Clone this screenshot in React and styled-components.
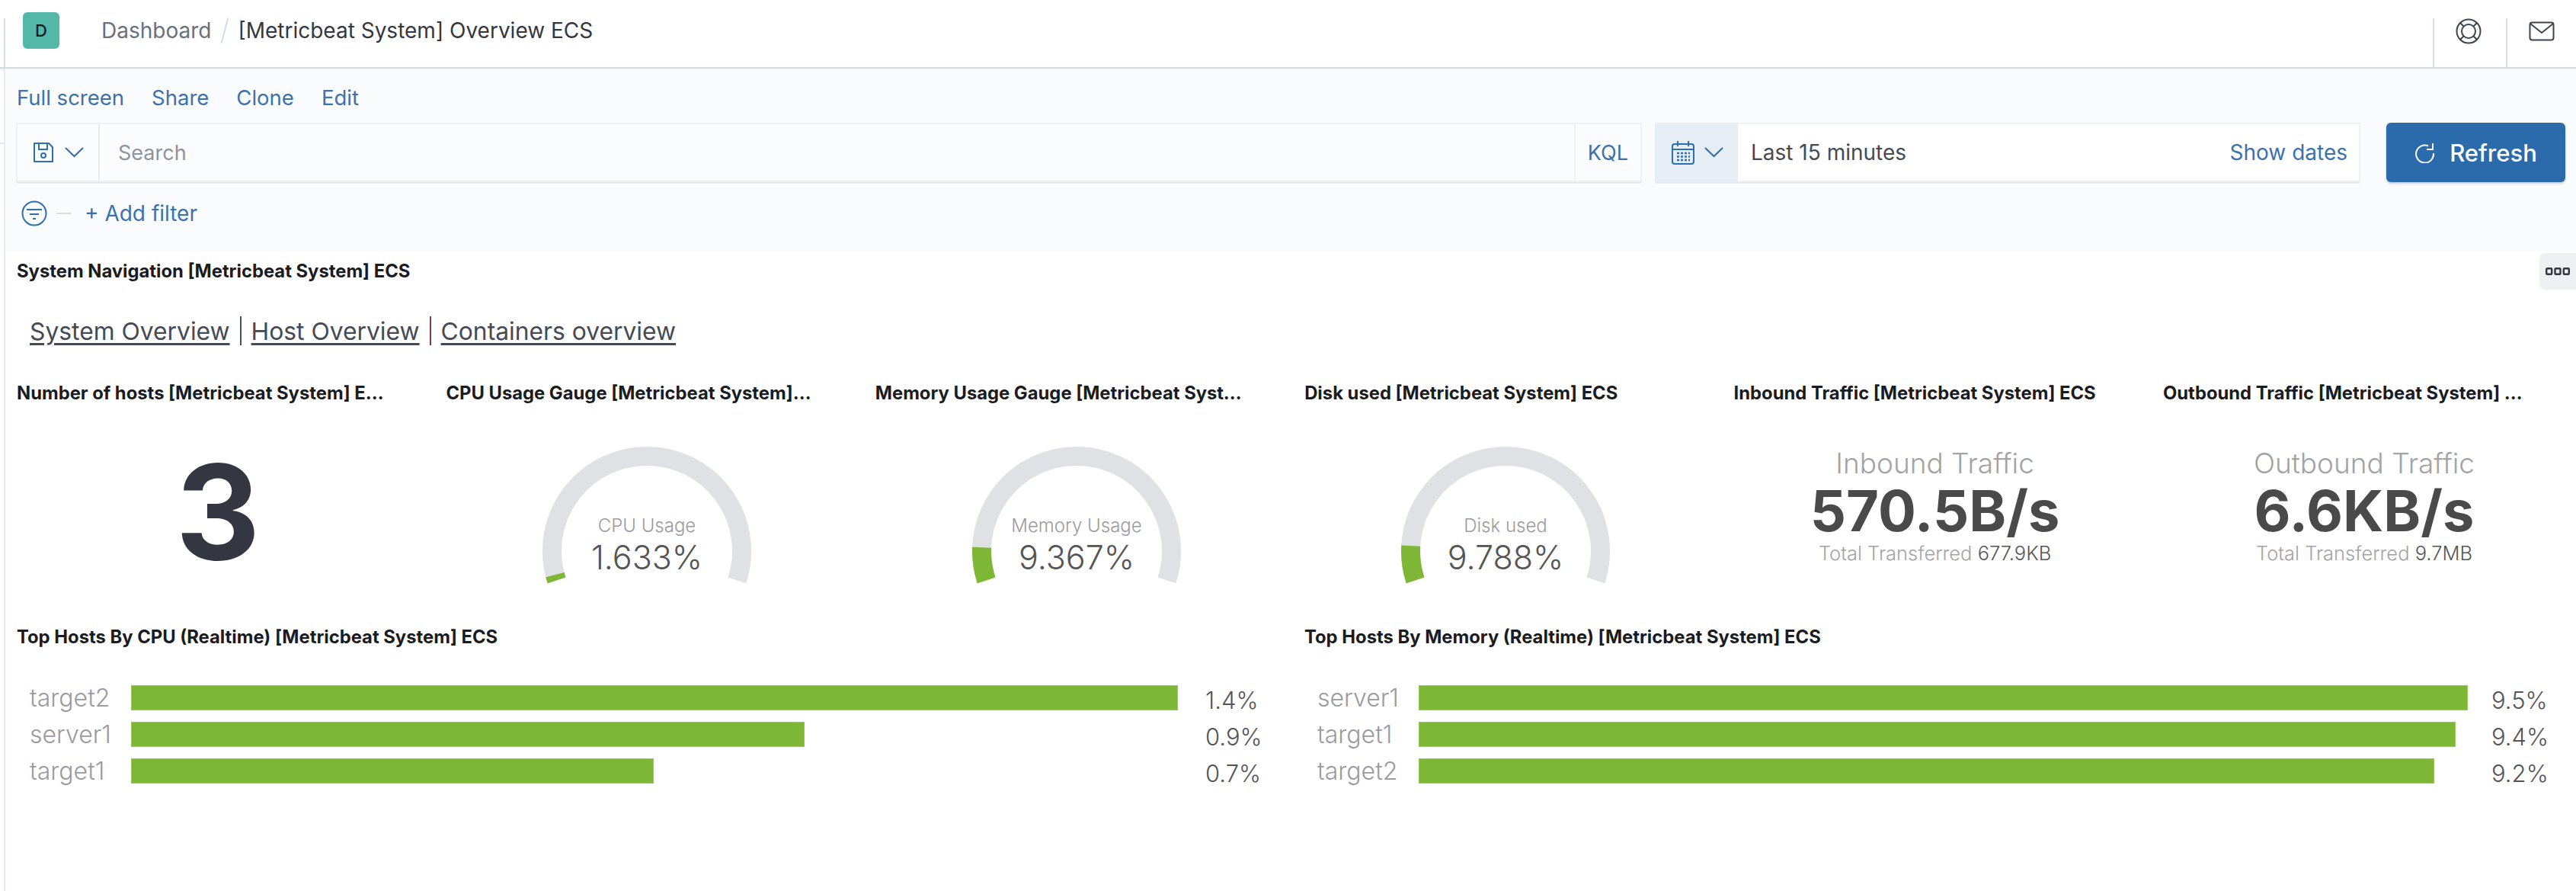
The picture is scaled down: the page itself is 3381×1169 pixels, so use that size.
import React from "react";
import styled, { createGlobalStyle } from "styled-components";

const GlobalStyle = createGlobalStyle`
  html, body {
    margin: 0;
    padding: 0;
    background: #fff;
  }
  * {
    box-sizing: border-box;
  }
`;

const Page = styled.div`
  width: 3381px;
  height: 1169px;
  overflow: hidden;
  background: #fff;
  font-family: Inter, "Liberation Sans", sans-serif;
  color: #343741;
`;

/* top bar */
const Header = styled.header`
  display: flex;
  height: 90px;
  border-bottom: 2px solid #d3dae6;
  box-shadow: 0 2px 3px rgba(152, 162, 179, 0.2);
  position: relative;
`;

const HeaderCell = styled.div`
  margin-top: 24px;
  width: ${(p) => p.$width}px;
  padding: ${(p) => p.$pad || "0"};
  border-left: ${(p) => (p.$line ? "2px solid #d8deea" : "none")};
  display: flex;
  justify-content: center;
`;

const Tile = styled.div`
  width: 48px;
  height: 48px;
  margin-top: -8px;
  border-radius: 6px;
  background: #54b8a9;
  color: #1a1c21;
  display: flex;
  align-items: center;
  justify-content: center;
  font-size: 22px;
  font-weight: 500;
`;

const Breadcrumbs = styled.nav`
  flex: 1;
  display: flex;
  align-items: center;
  height: 64px;
  margin-top: 8px;
  padding-left: 32px;
  font-size: 28px;
  color: #343741;
`;

const Crumb = styled.span`
  color: ${(p) => p.$color || "#343741"};
`;

const CrumbSlash = styled.span`
  width: 2px;
  height: 34px;
  margin: 0 16px 0 17px;
  background: #d3dae6;
  transform: rotate(15deg);
`;

const Body = styled.main`
  position: relative;
  margin-left: 5px;
  height: 1079px;
  border-left: 2px solid #e6e9f0;

  &::before {
    content: "";
    position: absolute;
    left: -7px;
    top: 97px;
    width: 5px;
    height: 2px;
    background: #e6e9f0;
  }
`;

/* query area */
const SubNav = styled.section`
  height: 240px;
  padding: 20px 14px 0 14px;
  background: #fafbfd;
`;

const TopMenu = styled.div`
  display: flex;
  gap: 36px;
  height: 36px;
  margin: 0 0 15px 1px;
  align-items: center;
  font-size: 27.5px;
  color: #3a72ad;
`;

const QueryRow = styled.div`
  display: flex;
  height: 78px;
`;

const Field = styled.div`
  display: flex;
  align-items: stretch;
  background: #fbfcfd;
  border: 2px solid #edf0f5;
  box-shadow: 0 2px 2px -1px rgba(152, 162, 179, 0.35);
`;

const SearchField = styled(Field)`
  width: 2134px;
`;

const SaveButton = styled.div`
  width: 108px;
  display: flex;
  align-items: center;
  gap: 14px;
  padding-left: 20px;
  border-right: 2px solid #e6e9f0;
  color: #2e6fae;
`;

const SearchText = styled.div`
  flex: 1;
  display: flex;
  align-items: center;
  padding-left: 24px;
  font-size: 27px;
  color: #8e93a0;
`;

const Kql = styled.div`
  display: flex;
  align-items: center;
  padding: 0 16px;
  border-left: 2px solid #edf0f5;
  font-size: 27px;
  color: #3a72ad;
`;

const DateField = styled(Field)`
  width: 926px;
  margin-left: 17px;
  background: #fff;
`;

const DateButton = styled.div`
  width: 109px;
  margin: -2px 0 -2px -2px;
  display: flex;
  align-items: center;
  gap: 13px;
  padding-left: 22px;
  background: #e6edf4;
  color: #2e6fae;
`;

const DateText = styled.div`
  flex: 1;
  display: flex;
  align-items: center;
  justify-content: space-between;
  padding: 0 15px 0 17px;
  font-size: 28px;
  color: #454a55;
`;

const ShowDates = styled.span`
  color: #3a72ad;
`;

const RefreshButton = styled.button`
  width: 235px;
  margin-left: 34px;
  display: flex;
  align-items: center;
  justify-content: center;
  gap: 19px;
  border: 0;
  border-radius: 6px;
  background: #2b6aab;
  box-shadow: 0 2px 3px rgba(80, 100, 140, 0.3);
  color: #fff;
  font-family: inherit;
  font-size: 31px;
  font-weight: 500;
`;

const FilterRow = styled.div`
  display: flex;
  align-items: center;
  height: 32px;
  margin: 25px 0 0 7px;
  color: #2e6fae;
`;

const FilterDash = styled.span`
  width: 19px;
  height: 2px;
  margin: 0 18px 0 12px;
  background: #d8dde6;
`;

const AddFilter = styled.span`
  font-size: 28px;
  color: #3a72ad;
`;

/* dashboard panels */
const Panels = styled.div`
  position: relative;
`;

const PanelMenu = styled.div`
  position: absolute;
  top: 2px;
  right: 0;
  width: 48px;
  height: 48px;
  display: flex;
  align-items: center;
  justify-content: center;
  border-radius: 8px 0 0 8px;
  background: #eef0f3;
  color: #343741;
`;

const PanelTitle = styled.h3`
  margin: 0;
  height: 32px;
  width: ${(p) => p.$width || 490}px;
  line-height: 32px;
  font-size: 23.8px;
  font-weight: 700;
  color: #1a1c21;
  white-space: nowrap;
  overflow: hidden;
  text-overflow: ellipsis;
`;

const NavPanel = styled.section`
  height: 166px;
  padding: 10px 0 0 15px;
`;

const LinkRow = styled.div`
  display: flex;
  align-items: center;
  height: 40px;
  margin: 42px 0 0 17px;
  gap: 13px;
  font-size: 31.8px;
  color: #454a55;
`;

const NavLink = styled.a`
  text-decoration: underline;
  text-underline-offset: 4px;
`;

const LinkSep = styled.span`
  width: 2px;
  height: 38px;
  background: ${(p) => p.$color};
`;

const MetricGrid = styled.div`
  display: grid;
  grid-template-columns: repeat(6, 550px);
  column-gap: 13.4px;
  height: 324px;
  padding: 4px 0 0 5px;
`;

const MetricPanel = styled.section`
  display: flex;
  flex-direction: column;
  padding-left: 10px;
`;

const MetricBody = styled.div`
  height: 292px;
  margin-left: -12px;
  display: flex;
  flex-direction: column;
  align-items: center;
`;

const BigNumber = styled.div`
  margin-top: 53px;
  line-height: 172px;
  font-size: 172px;
  font-weight: 700;
  color: #343741;
`;

const GaugeSvg = styled.svg`
  margin-top: 44px;
  font-family: Inter, "Liberation Sans", sans-serif;
`;

const GaugeLabel = styled.text`
  font-size: 24px;
  font-weight: 300;
  fill: #9a9a9f;
`;

const GaugeValue = styled.text`
  font-size: 43px;
  font-weight: 300;
  fill: #555;
`;

const TrafficLabel = styled.div`
  margin-top: 52px;
  line-height: 48px;
  font-size: 37px;
  font-weight: 300;
  color: #a3a3a3;
`;

const TrafficValue = styled.div`
  line-height: 76px;
  font-size: 74px;
  font-weight: 700;
  color: #4a4a4a;
`;

const TrafficTotal = styled.div`
  line-height: 36px;
  font-size: 25.5px;
  font-weight: 300;
  color: #a3a3a3;
`;

const TrafficTotalValue = styled.span`
  color: #555;
`;

const ChartGrid = styled.div`
  display: grid;
  grid-template-columns: 1690px 1fr;
  padding-left: 5px;
`;

const ChartPanel = styled.section`
  padding-left: 10px;
`;

const Chart = styled.div`
  display: flex;
  flex-direction: column;
  gap: 15px;
  margin-top: 47px;
  padding-left: 17px;
`;

const ChartRow = styled.div`
  display: flex;
  align-items: center;
  height: 33px;
`;

const ChartLabel = styled.div`
  width: 133px;
  font-size: 32px;
  font-weight: 300;
  color: #9a9a9f;
`;

const Bar = styled.div`
  width: ${(p) => p.$width}px;
  height: 33px;
  background: #7db735;
  border: 1px solid #96c65e;
`;

const ChartValue = styled.div`
  position: relative;
  top: 3px;
  margin-left: auto;
  width: ${(p) => p.$offset}px;
  font-size: 31px;
  font-weight: 300;
  color: #555;
`;

/* icons */
const SaveIcon = () => (
  <svg width="28" height="28" viewBox="0 0 28 28" fill="none" stroke="currentColor" strokeWidth="2">
    <path d="M2 2h19l5 5v19H2z" strokeLinejoin="round" />
    <path d="M8 2v8h11V2" />
    <circle cx="14" cy="18" r="3" />
  </svg>
);

const Chevron = () => (
  <svg width="25" height="14" viewBox="0 0 25 14" fill="none" stroke="currentColor" strokeWidth="2">
    <path d="M1 1l11.5 11L24 1" />
  </svg>
);

const CalendarIcon = () => (
  <svg width="30" height="31" viewBox="0 0 30 31" fill="none" stroke="currentColor" strokeWidth="2">
    <rect x="1" y="4" width="28" height="26" rx="3" />
    <path d="M1 11h28M8 0v7M22 0v7" />
    <path strokeWidth="2.6" strokeDasharray="3 2" d="M7 16h17M7 20.5h17M7 25h17" />
  </svg>
);

const RefreshIcon = () => (
  <svg width="27" height="27" viewBox="0 0 27 27" fill="none" stroke="currentColor" strokeWidth="2">
    <path d="M18 4.5A11.5 11.5 0 1 0 25 14" />
    <path d="M24 1v8h-8" />
  </svg>
);

const FilterIcon = () => (
  <svg width="34" height="34" viewBox="0 0 34 34" fill="none" stroke="currentColor" strokeWidth="2">
    <circle cx="17" cy="17" r="15.5" />
    <path d="M7 12h20M11 18h12M15 24h4" />
  </svg>
);

const LifebuoyIcon = () => (
  <svg width="34" height="34" viewBox="0 0 34 34" fill="none" stroke="#3f434d" strokeWidth="2">
    <circle cx="17" cy="17" r="15.5" />
    <circle cx="17" cy="17" r="9" />
    <path d="M6 6l5 5M28 6l-5 5M6 28l5-5M28 28l-5-5" />
  </svg>
);

const MailIcon = () => (
  <svg width="34" height="26" viewBox="0 0 34 26" fill="none" stroke="#3f434d" strokeWidth="2">
    <rect x="1.5" y="1.5" width="31" height="23" rx="3" />
    <path d="M2 3l15 12L32 3" />
  </svg>
);

const DotsIcon = () => (
  <svg width="32" height="10" viewBox="0 0 32 10" fill="none" stroke="currentColor" strokeWidth="2.4">
    <rect x="1.2" y="1.2" width="7" height="7.6" rx="1" />
    <rect x="12.5" y="1.2" width="7" height="7.6" rx="1" />
    <rect x="23.8" y="1.2" width="7" height="7.6" rx="1" />
  </svg>
);

/* gauge arc goes over 216 degrees, starting bottom left */
const polar = (r, deg) => {
  const a = (deg * Math.PI) / 180;
  return [150 + r * Math.cos(a), 147 + r * Math.sin(a)];
};

const arcPath = (from, to) => {
  const r = 124.5;
  const [x1, y1] = polar(r, 162 + (216 * from) / 100);
  const [x2, y2] = polar(r, 162 + (216 * to) / 100);
  const large = ((to - from) * 216) / 100 > 180 ? 1 : 0;
  return `M${x1} ${y1}A${r} ${r} 0 ${large} 1 ${x2} ${y2}`;
};

const Gauge = ({ label, value }) => (
  <GaugeSvg width="300" height="200" viewBox="0 0 300 200" fill="none">
    <path d={arcPath(0, 100)} stroke="#e0e1e5" strokeWidth="25" />
    <path d={arcPath(0, value)} stroke="#7db735" strokeWidth="25" />
    <GaugeLabel x="150" y="122" textAnchor="middle">
      {label}
    </GaugeLabel>
    <GaugeValue x="150" y="171" textAnchor="middle">
      {value}%
    </GaugeValue>
  </GaugeSvg>
);

const Traffic = ({ label, value, total }) => (
  <>
    <TrafficLabel>{label}</TrafficLabel>
    <TrafficValue>{value}</TrafficValue>
    <TrafficTotal>
      Total Transferred <TrafficTotalValue>{total}</TrafficTotalValue>
    </TrafficTotal>
  </>
);

const cpuHosts = [
  { name: "target2", width: 1374, value: "1.4%" },
  { name: "server1", width: 884, value: "0.9%" },
  { name: "target1", width: 686, value: "0.7%" },
];

const memoryHosts = [
  { name: "server1", width: 1377, value: "9.5%" },
  { name: "target1", width: 1361, value: "9.4%" },
  { name: "target2", width: 1333, value: "9.2%" },
];

const HostChart = ({ hosts, offset }) => (
  <Chart>
    {hosts.map((h) => (
      <ChartRow key={h.name}>
        <ChartLabel>{h.name}</ChartLabel>
        <Bar $width={h.width} />
        <ChartValue $offset={offset}>{h.value}</ChartValue>
      </ChartRow>
    ))}
  </Chart>
);

const App = () => {
  return (
    <Page>
      <GlobalStyle />
      <Header>
        <HeaderCell $width={5} />
        <HeaderCell $width={96} $line>
          <Tile>D</Tile>
        </HeaderCell>
        <Breadcrumbs>
          <Crumb $color="#69707d">Dashboard</Crumb>
          <CrumbSlash />
          <Crumb>[Metricbeat System] Overview ECS</Crumb>
        </Breadcrumbs>
        <HeaderCell $width={96} $line $pad="0 4px 0 0">
          <LifebuoyIcon />
        </HeaderCell>
        <HeaderCell $width={92} $line $pad="4px 0 0 0">
          <MailIcon />
        </HeaderCell>
      </Header>
      <Body>
        <SubNav>
          <TopMenu>
            <span>Full screen</span>
            <span>Share</span>
            <span>Clone</span>
            <span>Edit</span>
          </TopMenu>
          <QueryRow>
            <SearchField>
              <SaveButton>
                <SaveIcon />
                <Chevron />
              </SaveButton>
              <SearchText>Search</SearchText>
              <Kql>KQL</Kql>
            </SearchField>
            <DateField>
              <DateButton>
                <CalendarIcon />
                <Chevron />
              </DateButton>
              <DateText>
                <span>Last 15 minutes</span>
                <ShowDates>Show dates</ShowDates>
              </DateText>
            </DateField>
            <RefreshButton>
              <RefreshIcon />
              Refresh
            </RefreshButton>
          </QueryRow>
          <FilterRow>
            <FilterIcon />
            <FilterDash />
            <AddFilter>+ Add filter</AddFilter>
          </FilterRow>
        </SubNav>
        <Panels>
          <PanelMenu>
            <DotsIcon />
          </PanelMenu>
          <NavPanel>
            <PanelTitle $width={1000}>System Navigation [Metricbeat System] ECS</PanelTitle>
            <LinkRow>
              <NavLink>System Overview</NavLink>
              <LinkSep $color="#4b4f58" />
              <NavLink>Host Overview</NavLink>
              <LinkSep $color="#7d3b4c" />
              <NavLink>Containers overview</NavLink>
            </LinkRow>
          </NavPanel>
          <MetricGrid>
            <MetricPanel>
              <PanelTitle>Number of hosts [Metricbeat System] ECS</PanelTitle>
              <MetricBody>
                <BigNumber>3</BigNumber>
              </MetricBody>
            </MetricPanel>
            <MetricPanel>
              <PanelTitle $width={484}>CPU Usage Gauge [Metricbeat System] ECS</PanelTitle>
              <MetricBody>
                <Gauge label="CPU Usage" value={1.633} />
              </MetricBody>
            </MetricPanel>
            <MetricPanel>
              <PanelTitle $width={484}>Memory Usage Gauge [Metricbeat System] ECS</PanelTitle>
              <MetricBody>
                <Gauge label="Memory Usage" value={9.367} />
              </MetricBody>
            </MetricPanel>
            <MetricPanel>
              <PanelTitle>Disk used [Metricbeat System] ECS</PanelTitle>
              <MetricBody>
                <Gauge label="Disk used" value={9.788} />
              </MetricBody>
            </MetricPanel>
            <MetricPanel>
              <PanelTitle>Inbound Traffic [Metricbeat System] ECS</PanelTitle>
              <MetricBody>
                <Traffic label="Inbound Traffic" value="570.5B/s" total="677.9KB" />
              </MetricBody>
            </MetricPanel>
            <MetricPanel>
              <PanelTitle $width={480}>Outbound Traffic [Metricbeat System] ECS</PanelTitle>
              <MetricBody>
                <Traffic label="Outbound Traffic" value="6.6KB/s" total="9.7MB" />
              </MetricBody>
            </MetricPanel>
          </MetricGrid>
          <ChartGrid>
            <ChartPanel>
              <PanelTitle $width={1000}>Top Hosts By CPU (Realtime) [Metricbeat System] ECS</PanelTitle>
              <HostChart hosts={cpuHosts} offset={120} />
            </ChartPanel>
            <ChartPanel>
              <PanelTitle $width={1000}>Top Hosts By Memory (Realtime) [Metricbeat System] ECS</PanelTitle>
              <HostChart hosts={memoryHosts} offset={111} />
            </ChartPanel>
          </ChartGrid>
        </Panels>
      </Body>
    </Page>
  );
};

export default App;
